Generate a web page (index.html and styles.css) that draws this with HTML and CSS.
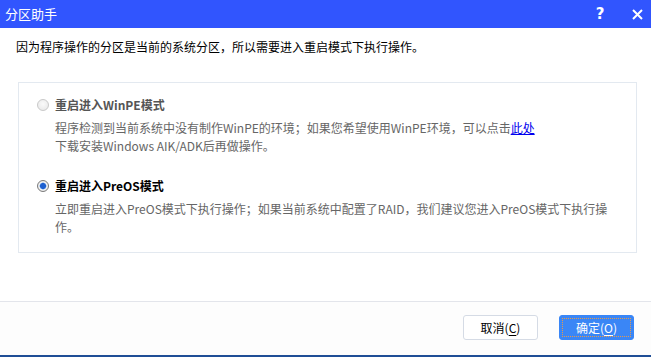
FILE: index.html
```html
<!DOCTYPE html>
<html lang="zh-CN">
<head>
<meta charset="utf-8">
<title>分区助手</title>
<link rel="stylesheet" href="styles.css">
</head>
<body>
<div class="dialog">
  <div class="titlebar">
    <span class="title">分区助手</span>
    <span class="tb-btn help">?</span>
    <span class="tb-btn close">
      <svg width="11" height="11" viewBox="0 0 11 11"><path d="M1 1 L10 10 M10 1 L1 10" stroke="#fff" stroke-width="2" fill="none"/></svg>
    </span>
  </div>
  <div class="content">
    <p class="message">因为程序操作的分区是当前的系统分区，所以需要进入重启模式下执行操作。</p>
    <div class="options">
      <div class="option disabled">
        <div class="opt-head"><span class="radio"></span><span class="opt-title">重启进入WinPE模式</span></div>
        <p class="opt-desc">程序检测到当前系统中没有制作WinPE的环境；如果您希望使用WinPE环境，可以点击<a class="link" href="#">此处</a><br>下载安装Windows AIK/ADK后再做操作。</p>
      </div>
      <div class="option">
        <div class="opt-head"><span class="radio checked"></span><span class="opt-title">重启进入PreOS模式</span></div>
        <p class="opt-desc">立即重启进入PreOS模式下执行操作；如果当前系统中配置了RAID，我们建议您进入PreOS模式下执行操<br>作。</p>
      </div>
    </div>
  </div>
  <div class="footer">
    <button class="btn">取消(<u>C</u>)</button>
    <button class="btn primary"><span class="focus">确定(<u>O</u>)</span></button>
  </div>
</div>
</body>
</html>
```
FILE: styles.css
```css
* { box-sizing: border-box; }
html, body { margin: 0; padding: 0; }
body {
  font-family: "Noto Sans CJK SC", "Noto Sans", sans-serif;
  font-size: 12px;
  background: #ffffff;
}
.dialog {
  width: 651px;
  height: 357px;
  display: flex;
  flex-direction: column;
  background: #ffffff;
  border-bottom: 2px solid #1f4e96;
}
.titlebar {
  height: 28px;
  background: #3155fe;
  display: flex;
  align-items: center;
  color: #fff;
  padding-left: 5px;
}
.title {
  font-size: 13px;
  flex: 1;
  line-height: 28px;
}
.tb-btn {
  display: flex;
  align-items: center;
  justify-content: center;
  color: #fff;
}
.help {
  font-family: "DejaVu Sans", sans-serif;
  font-weight: bold;
  font-size: 15px;
  width: 10px;
  margin-right: 27px;
}
.close {
  width: 11px;
  margin-right: 8px;
}
.content {
  flex: 1;
  padding: 10px 0 0 16px;
}
.message {
  margin: 0;
  line-height: 18px;
  color: #000;
}
.options {
  margin-top: 26px;
  margin-left: 2px;
  width: 619px;
  border: 1px solid #e3e9f0;
  padding: 13px 0 16px 18px;
}
.option + .option { margin-top: 22px; }
.opt-head {
  display: flex;
  align-items: center;
  height: 18px;
}
.radio {
  width: 12px;
  height: 12px;
  border-radius: 50%;
  border: 1px solid #c9c9c9;
  background: radial-gradient(circle at 50% 40%, #fafafa 0%, #e6e6e6 100%);
  margin-right: 6px;
  flex: none;
}
.radio.checked {
  border-color: #7a7a7a;
  background: radial-gradient(circle, #1d5fcf 0 2.6px, #8fb8f0 3.3px, #f2f2f2 3.8px, #dcdcdc 100%);
}
.opt-title {
  font-weight: bold;
  color: #000;
  line-height: 18px;
}
.disabled .opt-title { color: #555; }
.opt-desc {
  margin: 5px 0 0 18px;
  line-height: 18px;
  color: #666;
}
.link { color: #0000ee; text-decoration: underline; }
.footer {
  height: 54px;
  border-top: 1px solid #e3e5eb;
  display: flex;
  justify-content: flex-end;
  align-items: flex-start;
  padding: 13px 17px 0 0;
  gap: 21px;
  background: #fdfdfd;
}
.btn {
  width: 75px;
  height: 25px;
  border: 1px solid #d5dbe5;
  border-radius: 3px;
  background: #fff;
  font-family: "Noto Sans CJK SC", sans-serif;
  font-size: 12px;
  color: #000;
  padding: 0;
  display: flex;
  align-items: center;
  justify-content: center;
}
.btn u { text-underline-offset: 2px; }
.btn.primary {
  background: #3a86f6;
  border-color: #3a86f6;
  color: #fff;
  padding: 2px;
}
.focus {
  width: 100%;
  height: 100%;
  border: 1px dotted #e59a4f;
  display: flex;
  align-items: center;
  justify-content: center;
}
```
